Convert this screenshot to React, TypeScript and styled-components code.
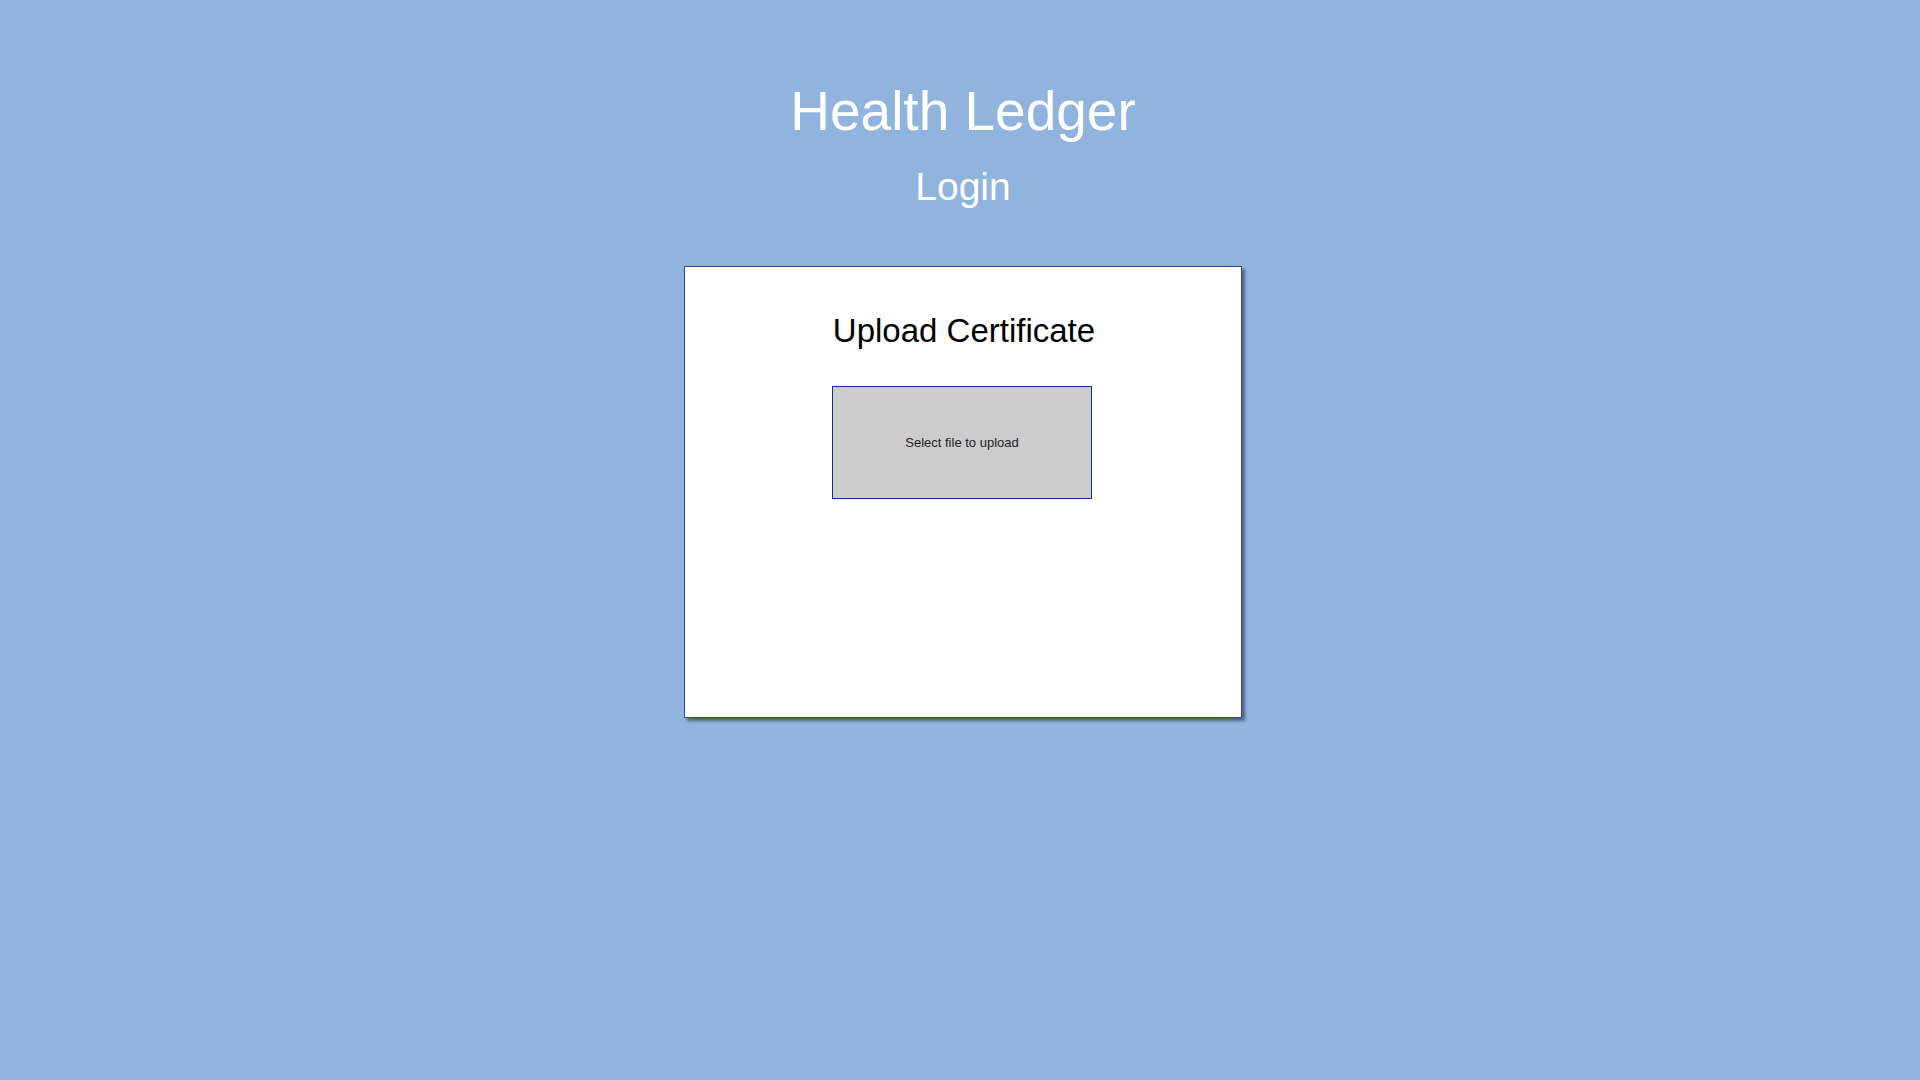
import React from "react";
import styled, { createGlobalStyle } from "styled-components";

const Global = createGlobalStyle`
  html, body {
    margin: 0;
    padding: 0;
    background: #91b4de;
    font-family: "Liberation Sans", Arial, sans-serif;
  }
  #root {
    min-height: 100vh;
  }
`;

const Page = styled.main`
  min-height: 100vh;
  box-sizing: border-box;
  display: flex;
  flex-direction: column;
  align-items: center;
  padding: 84px 0 0 6px;
`;

const Title = styled.h1`
  margin: 0;
  font-size: 55px;
  line-height: 55px;
  font-weight: normal;
  color: #ffffff;
`;

const Subtitle = styled.h2`
  margin: 28px 0 0;
  font-size: 39px;
  line-height: 39px;
  font-weight: normal;
  color: #ffffff;
`;

const Card = styled.section`
  margin-top: 60px;
  width: 558px;
  height: 452px;
  box-sizing: border-box;
  background: #ffffff;
  border: 1px solid #34488f;
  box-shadow: 3px 3px 3px rgba(0, 0, 0, 0.45);
  display: flex;
  flex-direction: column;
  align-items: center;
  padding-top: 47px;
`;

const CardTitle = styled.h3`
  margin: 0 0 0 2px;
  font-size: 33px;
  line-height: 33px;
  font-weight: normal;
  color: #000000;
`;

const DropZone = styled.label`
  margin-top: 39px;
  margin-right: 2px;
  width: 260px;
  height: 113px;
  box-sizing: border-box;
  background: #cccccc;
  border: 1px solid #1f2f7c;
  display: flex;
  align-items: center;
  justify-content: center;
  font-size: 13px;
  color: #222222;
  cursor: pointer;
`;

const HiddenInput = styled.input`
  display: none;
`;

export default function App() {
  return (
    <>
      <Global />
      <Page>
        <Title>Health Ledger</Title>
        <Subtitle>Login</Subtitle>
        <Card>
          <CardTitle>Upload Certificate</CardTitle>
          <DropZone>
            Select file to upload
            <HiddenInput type="file" />
          </DropZone>
        </Card>
      </Page>
    </>
  );
}
